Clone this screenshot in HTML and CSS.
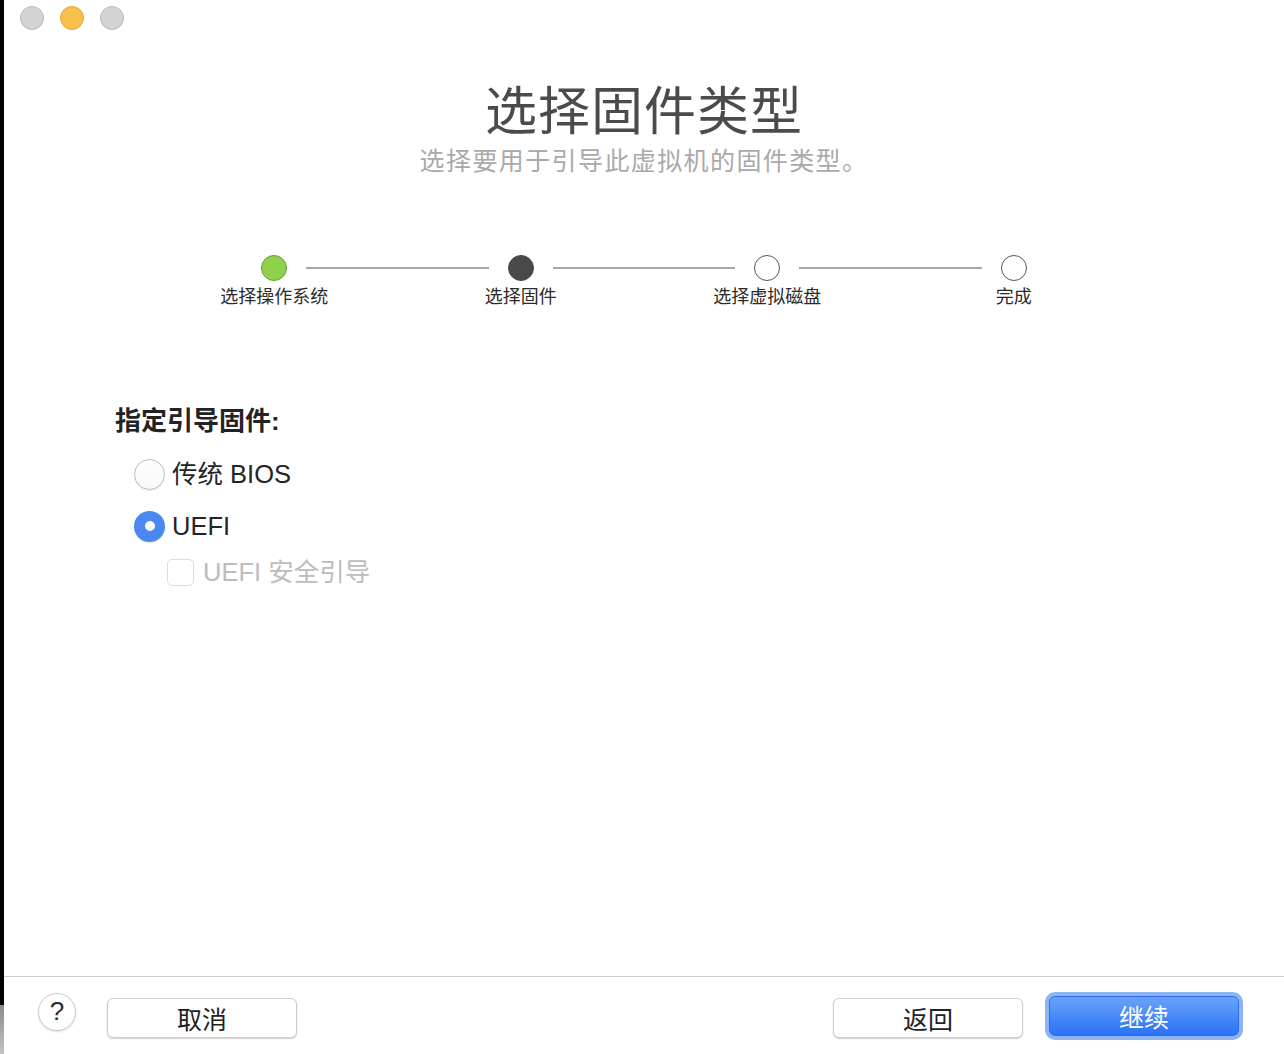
FILE: index.html
```html
<!DOCTYPE html>
<html lang="zh-CN">
<head>
<meta charset="utf-8">
<title>选择固件类型</title>
<link rel="stylesheet" href="styles.css">
</head>
<body>
<div class="window">
  <div class="titlebar">
    <span class="light grey"></span>
    <span class="light yellow"></span>
    <span class="light grey"></span>
  </div>

  <header class="header">
    <h1 class="title">选择固件类型</h1>
    <p class="subtitle">选择要用于引导此虚拟机的固件类型。</p>
  </header>

  <div class="stepper">
    <div class="dots">
      <span class="dot done"></span>
      <span class="line"></span>
      <span class="dot current"></span>
      <span class="line"></span>
      <span class="dot"></span>
      <span class="line"></span>
      <span class="dot"></span>
    </div>
    <div class="labels">
      <span>选择操作系统</span>
      <span>选择固件</span>
      <span>选择虚拟磁盘</span>
      <span>完成</span>
    </div>
  </div>

  <section class="options">
    <div class="section-label">指定引导固件:</div>
    <div class="radio-row">
      <span class="radio"></span>
      <span class="opt-text">传统 BIOS</span>
    </div>
    <div class="radio-row">
      <span class="radio checked"></span>
      <span class="opt-text">UEFI</span>
    </div>
    <div class="check-row">
      <span class="checkbox"></span>
      <span class="opt-text disabled">UEFI 安全引导</span>
    </div>
  </section>

  <footer class="footer">
    <span class="help">?</span>
    <span class="btn">取消</span>
    <span class="spacer"></span>
    <span class="btn">返回</span>
    <span class="btn-focus"><span class="btn primary">继续</span></span>
  </footer>
</div>
</body>
</html>
```

FILE: styles.css
```css
* { box-sizing: border-box; }
html, body { margin: 0; padding: 0; }
body {
  width: 1284px;
  height: 1054px;
  overflow: hidden;
  background: linear-gradient(to bottom, #000 0, #000 1005px, #8a8a8a 1005px, #c4c4c4 1054px);
  font-family: "Liberation Sans", "Noto Sans CJK SC", sans-serif;
}
.window {
  margin-left: 4px;
  width: 1280px;
  height: 1054px;
  background: #fff;
  display: flex;
  flex-direction: column;
}
.titlebar {
  height: 36px;
  display: flex;
  align-items: flex-start;
  gap: 16px;
  padding: 6px 0 0 16px;
}
.light {
  width: 24px;
  height: 24px;
  border-radius: 50%;
  display: block;
}
.light.grey { background: #d3d3d3; border: 1px solid #b9b9b9; }
.light.yellow { background: #f8c04c; border: 1px solid #e1a73d; }

.header {
  text-align: center;
  padding-top: 46px;
}
.title {
  margin: 0;
  font-size: 52px;
  line-height: 60px;
  font-weight: 400;
  color: #4b4b4b;
  letter-spacing: 1px;
}
.subtitle {
  margin: 4px 0 0;
  font-size: 25px;
  line-height: 30px;
  color: #a9a9a9;
  letter-spacing: 1.4px;
}

.stepper {
  margin-top: 79px;
  display: flex;
  flex-direction: column;
  align-items: center;
}
.dots {
  width: 766px;
  display: flex;
  align-items: center;
}
.dot {
  width: 26px;
  height: 26px;
  border-radius: 50%;
  border: 1.5px solid #555;
  background: #fff;
  flex: none;
}
.dot.done { background: #8fd14b; border-color: #6a9a3a; }
.dot.current { background: #494949; border-color: #494949; }
.line {
  flex: 1;
  height: 2px;
  background: #a6a6a6;
  margin: 0 19px;
}
.labels {
  width: 986px;
  display: grid;
  grid-template-columns: repeat(4, 1fr);
  margin-top: 2px;
}
.labels span {
  text-align: center;
  font-size: 18px;
  line-height: 28px;
  color: #2b2b2b;
}

.options {
  margin-top: 92px;
  padding-left: 111px;
  display: flex;
  flex-direction: column;
}
.section-label {
  font-size: 26px;
  line-height: 36px;
  font-weight: 700;
  color: #232323;
}
.radio-row {
  display: flex;
  align-items: center;
  gap: 7px;
  padding-left: 19px;
  height: 52px;
}
.section-label + .radio-row { margin-top: 9px; }
.radio {
  width: 31px;
  height: 31px;
  border-radius: 50%;
  border: 1px solid #bdbdbd;
  background: linear-gradient(#fff, #f7f7f7);
  box-shadow: 0 1px 1px rgba(0,0,0,0.08);
  display: flex;
  align-items: center;
  justify-content: center;
}
.radio.checked {
  border: none;
  background: #4a87f1;
}
.radio.checked::after {
  content: "";
  width: 10px;
  height: 10px;
  border-radius: 50%;
  background: #fff;
}
.opt-text {
  font-size: 25.5px;
  line-height: 32px;
  color: #242424;
}
.opt-text.disabled { color: #bcbcbc; }
.check-row {
  display: flex;
  align-items: center;
  gap: 9px;
  padding-left: 52px;
  height: 40px;
  margin-top: 0px;
}
.checkbox {
  width: 27px;
  height: 27px;
  border: 1px solid #dcdcdc;
  border-radius: 5px;
  background: #fff;
}

.footer {
  margin-top: auto;
  height: 78px;
  border-top: 1px solid #cfcfcf;
  display: flex;
  align-items: center;
  padding: 0 41px 0 34px;
}
.help {
  width: 38px;
  height: 38px;
  border-radius: 50%;
  border: 1px solid #c9c9c9;
  box-shadow: 0 1px 2px rgba(0,0,0,0.15);
  display: flex;
  align-items: center;
  justify-content: center;
  font-size: 26px;
  color: #2a2a2a;
  margin-right: 31px;
  margin-top: -8px;
}
.btn {
  width: 190px;
  height: 40px;
  border-radius: 6px;
  border: 1px solid #cdcdcd;
  box-shadow: 0 1px 1.5px rgba(0,0,0,0.18);
  background: #fff;
  display: flex;
  align-items: center;
  justify-content: center;
  font-size: 25px;
  color: #222;
  margin-top: 4px;
}
.spacer { flex: 1; }
.btn-focus {
  margin-left: 22px;
  padding: 4px;
  border-radius: 10px;
  background: #8db5f5;
  display: flex;
}
.btn.primary {
  margin-top: 0;
  border: 1px solid #2f6ee8;
  background: linear-gradient(#68a3fa, #2a72f6);
  color: #fff;
  box-shadow: none;
}
```
